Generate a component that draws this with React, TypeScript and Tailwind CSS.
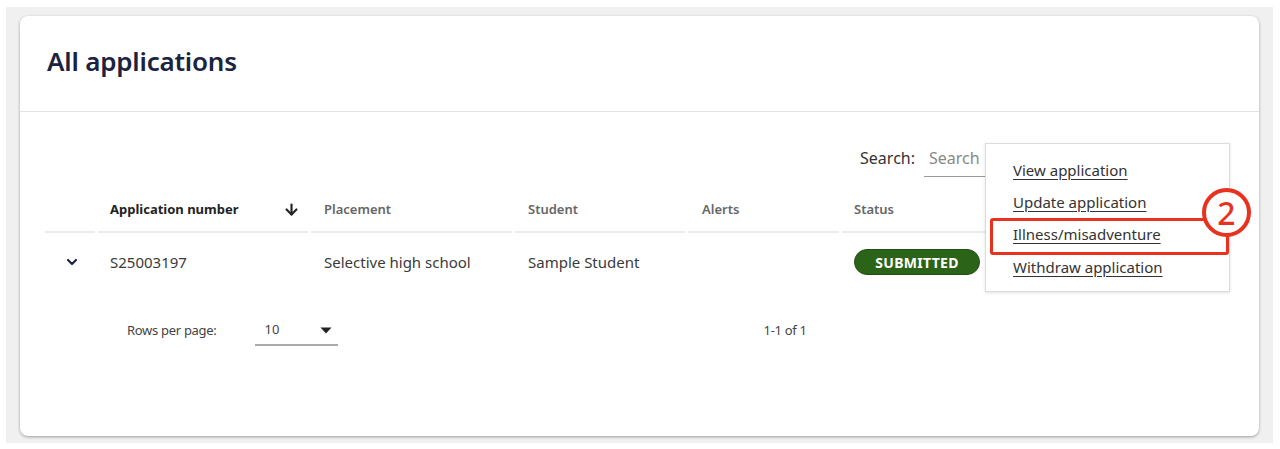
import React from "react";
import { ArrowDown, ChevronDown } from "lucide-react";

const font = { fontFamily: '"Noto Sans", "Open Sans", sans-serif' };

export default function App() {
  return (
    <div className="w-full h-[449px] bg-white pt-[7px] pl-[6px] pr-[7px] pb-[6px]" style={font}>
      <div className="h-full bg-[#f0f0f0] pl-[14px] pr-[14px] pt-[9px] pb-[7px]">
        <div className="h-full bg-white rounded-[8px] shadow-[0_1px_3px_rgba(0,0,0,0.35)] flex flex-col">
          <div className="h-[96px] border-b border-[#e3e3e3] px-[27px] pb-[5px] flex items-center">
            <h1 className="text-[26px] font-semibold text-[#1c2340] tracking-[-0.2px]">All applications</h1>
          </div>
          <div className="relative flex-1 px-[25px] pt-[29px]">
            <div className="flex justify-end h-[36px] pr-[10px]">
              <span className="text-[16px] text-[#333] mr-[9px] pt-[5px]">Search:</span>
              <div className="w-[300px] h-full border-b border-[#999] pl-[5px] pt-[5px] text-[16px] text-[#888]">
                Search
              </div>
            </div>
            <div className="mt-[11px] flex gap-[3px] text-[13px] font-semibold text-[#666]">
              <div className="w-[50px] h-[45px] border-b-2 border-[#ebebeb]"></div>
              <div className="w-[210px] h-[45px] border-b-2 border-[#ebebeb] flex items-center justify-between pl-[12px] pr-[8px] text-[#222] font-bold">
                <span>Application number</span>
                <ArrowDown size={17} strokeWidth={3} className="text-[#222]" />
              </div>
              <div className="w-[201px] h-[45px] border-b-2 border-[#ebebeb] flex items-center pl-[13px]">Placement</div>
              <div className="w-[170px] h-[45px] border-b-2 border-[#ebebeb] flex items-center pl-[13px]">Student</div>
              <div className="w-[151px] h-[45px] border-b-2 border-[#ebebeb] flex items-center pl-[14px]">Alerts</div>
              <div className="flex-1 h-[45px] border-b-2 border-[#ebebeb] flex items-center pl-[12px]">Status</div>
            </div>
            <div className="flex gap-[3px] text-[15px] text-[#3a3a3a] h-[58px] items-center">
              <div className="w-[50px] flex justify-center pl-[3px]">
                <ChevronDown size={16} strokeWidth={3.2} className="text-[#1c2340]" />
              </div>
              <div className="w-[210px] pl-[12px]">S25003197</div>
              <div className="w-[201px] pl-[13px]">Selective high school</div>
              <div className="w-[170px] pl-[13px]">Sample Student</div>
              <div className="w-[151px]"></div>
              <div className="flex-1 pl-[12px]">
                <span className="inline-flex items-center justify-center w-[126px] h-[26px] rounded-full bg-[#2b6419] border border-[#1f4f12] text-white font-bold text-[14px] tracking-[0.3px]">
                  SUBMITTED
                </span>
              </div>
            </div>
            <div className="mt-[25px] flex items-center h-[30px] text-[13px] text-[#444]">
              <span className="ml-[82px] tracking-[-0.3px]">Rows per page:</span>
              <div className="ml-[38px] w-[83px] h-[30px] border-b-2 border-[#aaa] flex items-center justify-between pl-[10px] pr-[6px]">
                <span>10</span>
                <svg width="12" height="7" viewBox="0 0 12 7"><path d="M0.5 0.5 L11.5 0.5 L6 6.5 Z" fill="#222" /></svg>
              </div>
              <span className="ml-[426px] tracking-[-0.3px]">1-1 of 1</span>
            </div>

            <div className="absolute left-[965px] top-[31px] w-[245px] h-[149px] bg-white border border-[#dcdcdc] shadow-[0_1px_3px_rgba(0,0,0,0.12)] pt-[10px] pl-[27px] flex flex-col text-[15px] text-[#333]">
              <span className="h-[32px] flex items-center underline underline-offset-[3px]">View application</span>
              <span className="h-[32px] flex items-center underline underline-offset-[3px]">Update application</span>
              <span className="h-[33px] flex items-center underline underline-offset-[3px]">Illness/misadventure</span>
              <span className="h-[32px] flex items-center underline underline-offset-[3px]">Withdraw application</span>
            </div>
            <div className="absolute left-[970px] top-[106px] w-[239px] h-[37px] border-[3px] border-[#e8321f] rounded-[3px]"></div>
            <div className="absolute left-[1182px] top-[76px] w-[49px] h-[49px] rounded-full bg-white border-[4px] border-[#e8321f] flex items-center justify-center text-[#e8321f] text-[32px] font-medium leading-none">
              2
            </div>
          </div>
        </div>
      </div>
    </div>
  );
}
